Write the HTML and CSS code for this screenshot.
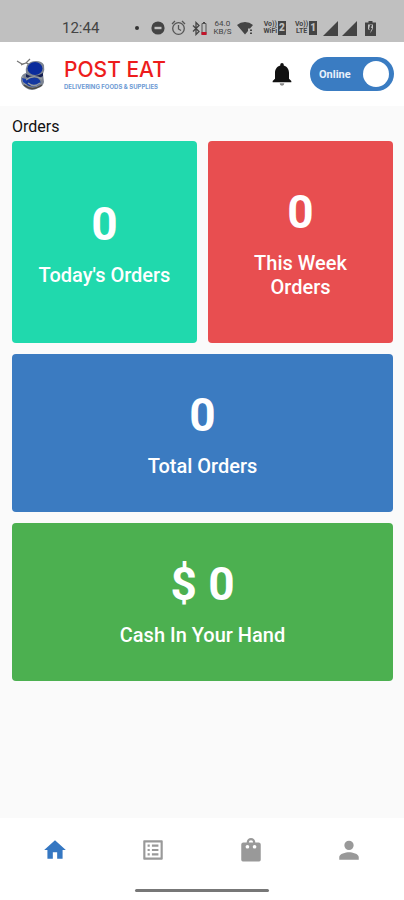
FILE: index.html
```html
<!DOCTYPE html>
<html lang="en">
<head>
<meta charset="utf-8">
<meta name="viewport" content="width=device-width, initial-scale=1">
<title>Post Eat</title>
<link rel="stylesheet" href="styles.css">
</head>
<body>
<div class="status">
  <span class="time">12:44</span>
  <div class="status-icons">
    <svg class="dot" width="4" height="4" viewBox="0 0 4 4"><circle cx="2" cy="2" r="2" fill="#333"/></svg>
    <svg width="14" height="14" viewBox="0 0 14 14"><circle cx="7" cy="7" r="6.6" fill="#444"/><path d="M3.5 5.8h7v2.4h-7z" fill="#c0c0c0"/></svg>
    <svg width="15" height="16" viewBox="0 0 15 16" fill="none" stroke="#555" stroke-width="1.3"><circle cx="7.500" cy="8.500" r="5.800"/><path d="M7.500 5v4l2.500 1.500M1 4l3-3M14 4l-3-3"/></svg>
    <svg width="15" height="15" viewBox="0 0 15 15"><path d="M1 4.500l6 6-3 3v-12l3 3-6 6" fill="none" stroke="#444" stroke-width="1.300"/><path d="M10 2.500V13.500h4V2.500z" fill="none" stroke="#555"/><path d="M11 1h2v1h-2z" fill="#444"/><path d="M9.500 11h5v3h-5z" fill="#c3152b"/></svg>
    <span class="speed"><span>64.0</span><span>KB/S</span></span>
    <svg width="17" height="14" viewBox="0 0 17 14" fill="#444"><path d="M0 4a12 12 0 0 1 16 0L13 7.500h-2V10L8 13.500z"/><path d="M13 8.500h2v1.500h-2zM13 11.500h2v1.500h-2z"/></svg>
    <span class="sim"><span class="volte"><span>Vo))</span><span>WiFi</span></span><b>2</b></span>
    <span class="sim"><span class="volte"><span>Vo))</span><span>LTE</span></span><b>1</b></span>
    <svg class="signal" width="15" height="15" viewBox="0 0 15 15"><path d="M15 0v15H0z" fill="#444"/></svg>
    <svg class="signal" width="15" height="15" viewBox="0 0 15 15"><path d="M15 0v15H0z" fill="#444"/></svg>
    <svg class="battery" width="11" height="15" viewBox="0 0 11 15"><path d="M3.500 0h4v1.500H11V15H0V1.500h3.500z" fill="#444"/><path d="M3 3.500h5v4L5.500 12V8.500H3z" fill="#c0c0c0"/><path d="M5 4h2L6 7h1.500L5 11V8H4z" fill="#444"/></svg>
  </div>
</div>
<header class="header">
  <svg class="logo" width="30" height="36" viewBox="0 0 30 36">
    <path d="M1 5l5 3 4-1 4-4M5 9l5-2 5 2" fill="none" stroke="#777" stroke-width="1.200"/>
    <path d="M11 9q3-4 9-4 6 0 8 4 1 5-1 9l1 8q-1 5-6 6-6 4-12 0-6-4-5-10 1-4 5-5-1-4 1-8z" fill="#7c8492"/>
    <ellipse cx="19" cy="12.500" rx="7.500" ry="6.500" fill="#0a2b9c"/>
    <path d="M10 18q8 5 17-1v3q-8 6-17 1z" fill="#152052"/>
    <ellipse cx="17" cy="26" rx="7.500" ry="4.500" fill="#1438a0"/>
    <path d="M7 20q-2 5 3 9M10 24q7-6 16-1M12 27q6 5 12 0" fill="none" stroke="#969ca2" stroke-width="1.500"/>
    <path d="M6 22l4 1v5l-3-2z" fill="#173dad"/>
    <path d="M8 29q8 7 18 0" fill="none" stroke="#4c4c48" stroke-width="1.500"/>
  </svg>
  <div class="brand"><span class="name">POST EAT</span><span class="tagline">DELIVERING FOODS &amp; SUPPLIES</span></div>
  <button class="bell" type="button" aria-label="Notifications"><svg width="28" height="28" viewBox="0 0 24 24"><path d="M18 16v-5c0-3.070-1.640-5.640-4.500-6.320V4a1.500 1.500 0 0 0-3 0v.68C7.630 5.360 6 7.920 6 11v5l-2 2v1h16v-1z" fill="#111"/><path d="M10 20h4a2 2 0 0 1-4 0z" fill="#888"/></svg></button>
  <label class="toggle"><input type="checkbox" checked><span>Online</span><span class="knob"></span></label>
</header>
<main class="main">
  <h1>Orders</h1>
  <div class="cards">
    <section class="card tall today"><strong>0</strong><span>Today's Orders</span></section>
    <section class="card tall week"><strong>0</strong><span>This Week Orders</span></section>
    <section class="card wide total"><strong>0</strong><span>Total Orders</span></section>
    <section class="card wide cash"><strong>$ 0</strong><span>Cash In Your Hand</span></section>
  </div>
</main>
<footer class="footer">
  <nav class="nav">
    <a href="#home" class="active" aria-label="Home"><svg viewBox="0 0 24 24"><path d="M10 20v-6h4v6h5v-8h3L12 3 2 12h3v8z"/></svg></a>
    <a href="#orders" aria-label="Orders"><svg viewBox="0 0 24 24"><path d="M19 5v14H5V5h14m1.100-2H3.900c-.5 0-.9.4-.9.900v16.200c0 .4.400.9.900.9h16.200c.4 0 .9-.5.900-.9V3.900c0-.5-.5-.9-.9-.9zM11 7h6v2h-6V7zm0 4h6v2h-6v-2zm0 4h6v2h-6zM7 7h2v2H7zm0 4h2v2H7zm0 4h2v2H7z"/></svg></a>
    <a href="#bag" aria-label="Bag"><svg viewBox="0 0 24 24"><path fill-rule="evenodd" d="M5 5h3a4 4 0 0 1 8 0h3a2 2 0 0 1 2 2v14a1.500 1.500 0 0 1-1.500 1.500h-15A1.500 1.500 0 0 1 3 21V7a2 2 0 0 1 2-2zM10 5h4a2 2 0 0 0-4 0zM7 9a1.700 1.700 0 1 0 3.400 0A1.700 1.700 0 0 0 7 9zm6.600 0a1.700 1.700 0 1 0 3.400 0 1.700 1.700 0 0 0-3.400 0z"/></svg></a>
    <a href="#profile" aria-label="Profile"><svg viewBox="0 0 24 24"><path d="M12 12a4.300 4.300 0 1 0 0-8.600 4.300 4.300 0 0 0 0 8.600zm0 2c-3 0-9 1.300-9 4.500V21h18v-2.500c0-3.200-6-4.500-9-4.500z"/></svg></a>
  </nav>
  <div class="home-bar"></div>
</footer>
</body>
</html>
```
FILE: styles.css
```css
* { box-sizing: border-box; }
body {
  margin: 0;
  min-height: 100vh;
  display: flex;
  flex-direction: column;
  background: #fafafa;
  font-family: Roboto, "Liberation Sans", sans-serif;
  color: #111;
}
svg { display: block; flex: none; }

.status {
  height: 42px;
  padding: 14px 28px 0 62px;
  display: flex;
  align-items: center;
  justify-content: space-between;
  background: #c0c0c0;
  color: #444;
}
.time { font-size: 15px; line-height: 18px; }
.status-icons { display: flex; align-items: center; gap: 6px; }
.dot { margin-right: 6px; }
.speed, .volte { display: flex; flex-direction: column; text-align: center; }
.speed { font-size: 8px; line-height: 8px; }
.speed span { line-height: 8px; }
.sim {
  display: flex;
  align-items: center;
  gap: 1px;
  margin-left: 3px;
  font-size: 7px;
  line-height: 7px;
  font-weight: 700;
}
.sim b {
  padding: 3px 1px;
  background: #444;
  color: #c0c0c0;
  font-size: 10px;
  line-height: 8px;
}
.signal + .signal { margin-left: -2px; }
.battery { margin-left: 2px; }

.header {
  height: 64px;
  padding: 0 10px 0 16px;
  display: flex;
  align-items: center;
  background: #fff;
}
.brand {
  margin-left: 18px;
  margin-right: auto;
  display: flex;
  flex-direction: column;
  font-family: Inter, sans-serif;
}
.name { font-size: 21px; line-height: 26px; font-weight: 500; color: #ed1c1c; }
.tagline { font-size: 6px; line-height: 8px; font-weight: 700; color: #6d9ad4; }
.bell { padding: 0; border: 0; background: none; }
.toggle {
  position: relative;
  width: 84px;
  height: 34px;
  margin-left: 14px;
  padding: 0 5px 0 9px;
  display: flex;
  align-items: center;
  justify-content: space-between;
  border-radius: 17px;
  background: #3a7cc2;
  color: #e8f1fb;
  font-size: 11px;
  font-weight: 700;
}
.toggle input { position: absolute; inset: 0; width: 100%; height: 100%; margin: 0; opacity: 0; }
.knob { width: 26px; height: 26px; border-radius: 50%; background: #fff; }

.main { flex: 1; padding: 11px 11px 12px 12px; }
h1 { margin: 0 0 4px; font-size: 16px; line-height: 20px; font-weight: 400; }
.cards { display: grid; grid-template-columns: 1fr 1fr; gap: 11px; }
.card {
  padding: 0 24px;
  display: flex;
  flex-direction: column;
  align-items: center;
  justify-content: center;
  gap: 12px;
  border-radius: 4px;
  color: #fff;
  text-align: center;
}
.card strong { font-size: 46px; line-height: 54px; font-weight: 700; }
.card span { font-size: 20px; line-height: 24px; font-weight: 500; }
.tall { min-height: 202px; }
.wide { min-height: 158px; grid-column: 1 / -1; }
.today { background: #20d9ad; }
.week { background: #e84e50; }
.total { background: #3b7bc1; }
.cash { background: #4cb050; }

.footer { background: #fff; padding-bottom: 8px; }
.nav { padding: 0 6px; display: flex; }
.nav a { flex: 1; height: 63px; display: flex; align-items: center; justify-content: center; }
.nav svg { width: 26px; height: 26px; fill: #999; }
.nav .active svg { fill: #3577c2; }
.home-bar { width: 134px; height: 3px; margin: 8px auto 0; border-radius: 2px; background: #777; }
```
